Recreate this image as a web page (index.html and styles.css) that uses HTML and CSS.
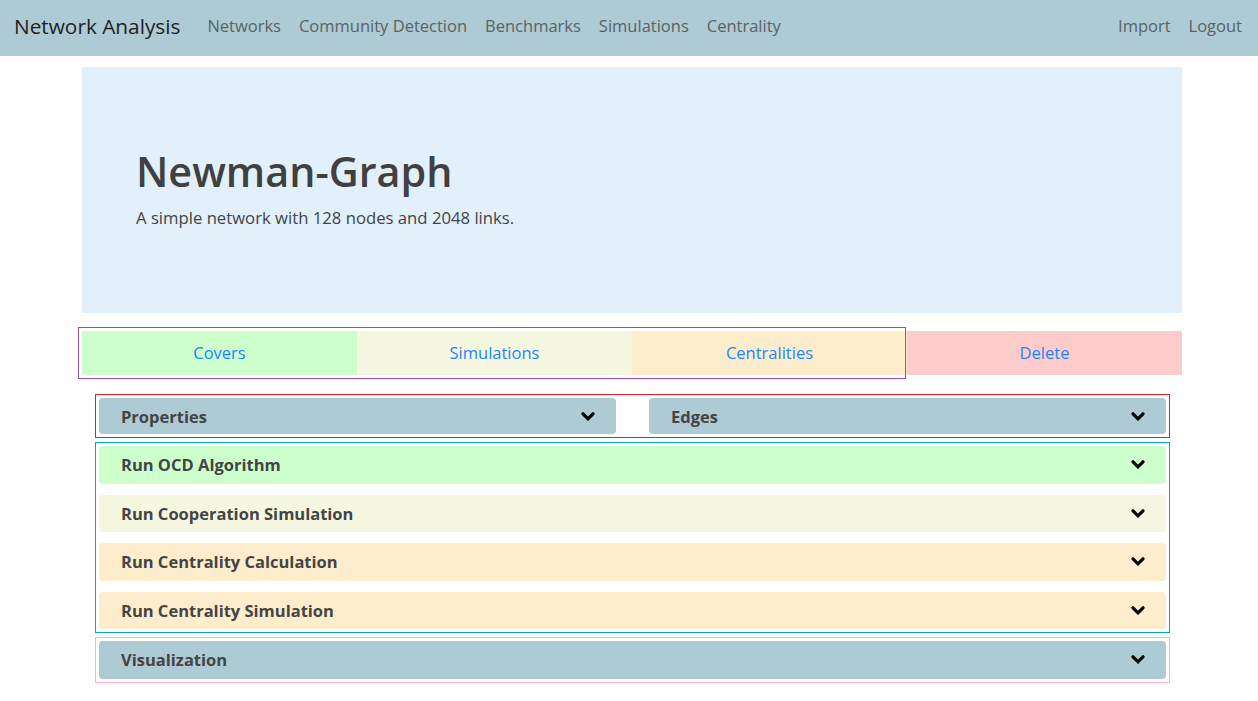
FILE: index.html
```html
<!DOCTYPE html>
<html lang="en">
<head>
<meta charset="utf-8">
<title>Network Analysis</title>
<link rel="stylesheet" href="styles.css">
</head>
<body>
<nav class="navbar">
  <a class="brand" href="#">Network Analysis</a>
  <ul class="nav nav-main">
    <li><a href="#">Networks</a></li>
    <li><a href="#">Community Detection</a></li>
    <li><a href="#">Benchmarks</a></li>
    <li><a href="#">Simulations</a></li>
    <li><a href="#">Centrality</a></li>
  </ul>
  <ul class="nav nav-user">
    <li><a href="#">Import</a></li>
    <li><a href="#">Logout</a></li>
  </ul>
</nav>

<main class="container">
  <section class="jumbotron">
    <h1 class="title">Newman-Graph</h1>
    <p class="lead">A simple network with 128 nodes and 2048 links.</p>
  </section>

  <div class="actions">
    <div class="action-group">
      <a class="action action-covers" href="#">Covers</a>
      <a class="action action-sims" href="#">Simulations</a>
      <a class="action action-cent" href="#">Centralities</a>
    </div>
    <a class="action action-delete" href="#">Delete</a>
  </div>

  <div class="box box-red">
    <div class="split">
      <div class="panel-head bg-steel"><span>Properties</span><svg class="chev" viewBox="0 0 14 9"><path d="M2 1.8 7 6.8 12 1.8"/></svg></div>
      <div class="panel-head bg-steel"><span>Edges</span><svg class="chev" viewBox="0 0 14 9"><path d="M2 1.8 7 6.8 12 1.8"/></svg></div>
    </div>
  </div>

  <div class="box box-blue">
    <div class="stack">
      <div class="panel-head row-head bg-green"><span>Run OCD Algorithm</span><svg class="chev" viewBox="0 0 14 9"><path d="M2 1.8 7 6.8 12 1.8"/></svg></div>
      <div class="panel-head row-head bg-beige"><span>Run Cooperation Simulation</span><svg class="chev" viewBox="0 0 14 9"><path d="M2 1.8 7 6.8 12 1.8"/></svg></div>
      <div class="panel-head row-head bg-orange"><span>Run Centrality Calculation</span><svg class="chev" viewBox="0 0 14 9"><path d="M2 1.8 7 6.8 12 1.8"/></svg></div>
      <div class="panel-head row-head bg-orange"><span>Run Centrality Simulation</span><svg class="chev" viewBox="0 0 14 9"><path d="M2 1.8 7 6.8 12 1.8"/></svg></div>
    </div>
  </div>

  <div class="box box-pink">
    <div class="panel-head row-head bg-steel"><span>Visualization</span><svg class="chev" viewBox="0 0 14 9"><path d="M2 1.8 7 6.8 12 1.8"/></svg></div>
  </div>
</main>
</body>
</html>
```

FILE: styles.css
```css
* { box-sizing: border-box; }

body {
  margin: 0;
  font-family: "Open Sans", "Noto Sans", sans-serif;
  color: #444;
  background: #fff;
}

a { text-decoration: none; }

.navbar {
  display: flex;
  align-items: center;
  height: 56px;
  padding: 0 7px 5px 14px;
  background: #aecad4;
}

.brand {
  font-size: 20.8px;
  color: #1e1e1e;
  margin-right: 18px;
}

.nav {
  display: flex;
  list-style: none;
  margin: 0;
  padding: 0;
}

.nav a {
  display: block;
  padding: 0 9px;
  font-size: 16.5px;
  color: #5a6266;
}

.nav-user { margin-left: auto; }

.container {
  width: 1100px;
  margin-left: 82px;
  padding-top: 11px;
}

.jumbotron {
  height: 246px;
  background: #e1f0fb;
  padding: 78px 54px 0;
  border-radius: 2px;
}

.title {
  margin: 0;
  font-size: 41.3px;
  font-weight: 600;
  line-height: 52px;
  color: #404040;
}

.lead {
  margin: 9px 0 0;
  font-size: 16.7px;
  line-height: 24px;
  color: #444;
}

.actions {
  display: flex;
  margin-top: 18px;
}

.action-group {
  position: relative;
  display: flex;
  flex: 3;
}

.action-group::before {
  content: "";
  position: absolute;
  inset: -4px 1px -4px -4px;
  border: 1px solid #a349a4;
  pointer-events: none;
}

.action {
  flex: 1;
  height: 44px;
  display: flex;
  align-items: center;
  justify-content: center;
  padding-bottom: 1px;
  font-size: 16.5px;
  color: #1a85ff;
}

.action-covers { background: #ccffcc; }
.action-sims { background: #f5f7e1; }
.action-cent { background: #feedcc; }
.action-delete { background: #ffcccc; }

.box {
  margin: 0 12px 0 13px;
  padding: 3px;
  border: 1px solid;
}

.box-red { margin-top: 19px; border-color: #ed1c24; }
.box-blue { margin-top: 4px; border-color: #00a2e8; }
.box-pink { margin-top: 4px; border-color: #ffaec9; }

.split {
  display: grid;
  grid-template-columns: 1fr 1fr;
  column-gap: 33px;
}

.stack {
  display: flex;
  flex-direction: column;
  gap: 11px;
}

.panel-head {
  display: flex;
  align-items: center;
  justify-content: space-between;
  height: 36px;
  padding: 0 21px 0 22px;
  border-radius: 4px;
  font-size: 16.5px;
  font-weight: 700;
  color: #444;
}

.row-head { height: 37.5px; }

.chev {
  width: 14px;
  height: 9px;
  fill: none;
  stroke: #000;
  stroke-width: 3.2;
  stroke-linecap: round;
  stroke-linejoin: miter;
}

.bg-steel { background: #aecad4; }
.bg-green { background: #ccffcc; }
.bg-beige { background: #f5f7e1; }
.bg-orange { background: #feedcc; }
```
